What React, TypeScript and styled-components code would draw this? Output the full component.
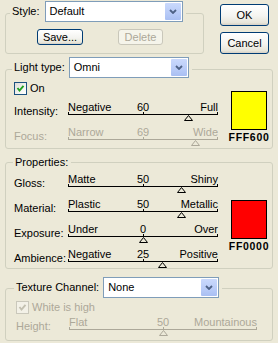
import React from 'react';
import styled, { createGlobalStyle } from 'styled-components';

const SOFT = '#aca899';

const GlobalStyle = createGlobalStyle`
  html, body {
    margin: 0;
    padding: 0;
    background: #ece9d8;
  }
  body {
    font-family: "Liberation Sans", Arial, sans-serif;
    font-size: 11px;
    color: #000;
  }
`;

const Dialog = styled.div`
  width: 278px;
  height: 343px;
  box-sizing: border-box;
  padding: 1px 5px 0;
  display: flex;
  flex-direction: column;
  overflow: hidden;
`;

const TopRow = styled.div`
  display: flex;
  align-items: flex-start;
`;

const Group = styled.fieldset<{ $w?: number; $mt?: number }>`
  width: ${(p) => (p.$w ? `${p.$w}px` : 'auto')};
  box-sizing: border-box;
  min-width: 0;
  margin: ${(p) => p.$mt ?? 0}px 0 0;
  padding: 0;
  border: 1px solid #d0d0bf;
  border-radius: 3px;
`;

const Legend = styled.legend<{ $ml: number; $pb?: number }>`
  margin-left: ${(p) => p.$ml}px;
  padding: 0 3px ${(p) => p.$pb ?? 0}px 2px;
  line-height: 13px;
`;

const LegendRow = styled.div<{ $gap: number }>`
  display: flex;
  align-items: center;
  gap: ${(p) => p.$gap}px;
`;

const SelectBox = styled.div<{ $w: number }>`
  width: ${(p) => p.$w}px;
  height: 21px;
  box-sizing: border-box;
  border: 1px solid #7f9db9;
  background: #fff;
  display: flex;
  align-items: center;
  justify-content: space-between;
  padding-left: 4px;
  line-height: 13px;
`;

const DropButton = styled.span`
  width: 16px;
  height: 17px;
  margin-right: 1px;
  border-radius: 1px;
  background: linear-gradient(180deg, #cad9fc 0%, #b8cbf7 60%, #a9bff3 100%);
  display: flex;
  align-items: center;
  justify-content: center;
`;

const PushButton = styled.button<{ $w: number; $h: number }>`
  width: ${(p) => p.$w}px;
  height: ${(p) => p.$h}px;
  box-sizing: border-box;
  padding: 0;
  border: 1px solid #003c74;
  border-radius: 3px;
  background: linear-gradient(180deg, #ffffff 0%, #f4f4f0 55%, #e8e6da 88%, #d6d0c5 100%);
  font-family: "Liberation Sans", Arial, sans-serif;
  font-size: 11px;
  color: #000;
  &:disabled {
    border-color: #c9c7ba;
    background: #f5f4ea;
    color: ${SOFT};
  }
`;

const SideButtons = styled.div`
  display: flex;
  flex-direction: column;
  gap: 6px;
  margin: 3px 0 0 16px;
`;

const StyleBody = styled.div`
  display: flex;
  gap: 35px;
  padding: 4px 0 8px 31px;
`;

const GroupBody = styled.div<{ $pad: string }>`
  display: flex;
  align-items: flex-start;
  padding: ${(p) => p.$pad};
`;

const Controls = styled.div<{ $gap: number }>`
  display: flex;
  flex-direction: column;
  gap: ${(p) => p.$gap}px;
`;

const CheckRow = styled.div<{ $off?: boolean; $mb?: number }>`
  display: flex;
  align-items: center;
  gap: 3px;
  height: 13px;
  line-height: 13px;
  margin-bottom: ${(p) => p.$mb ?? 0}px;
  color: ${(p) => (p.$off ? SOFT : '#000')};
`;

const CheckBox = styled.span<{ $off?: boolean }>`
  width: 13px;
  height: 13px;
  box-sizing: border-box;
  border: 1px solid ${(p) => (p.$off ? '#cac8bb' : '#1c5180')};
  background: ${(p) =>
    p.$off ? '#f3f1e7' : 'linear-gradient(135deg, #dcdcd7 0%, #f4f4f2 60%, #ffffff 100%)'};
  display: flex;
  align-items: center;
  justify-content: center;
`;

const Row = styled.div<{ $labelW: number }>`
  display: grid;
  grid-template-columns: ${(p) => p.$labelW}px auto;
  align-items: center;
`;

const RowLabel = styled.span<{ $off?: boolean }>`
  line-height: 12px;
  color: ${(p) => (p.$off ? SOFT : '#000')};
`;

const SliderWrap = styled.div<{ $w: number; $off?: boolean }>`
  width: ${(p) => p.$w}px;
  color: ${(p) => (p.$off ? SOFT : '#000')};
`;

const Ends = styled.div`
  display: grid;
  grid-template-columns: 1fr auto 1fr;
  height: 13px;
  line-height: 12px;
  white-space: nowrap;
`;

const MaxText = styled.span`
  justify-self: end;
`;

const Track = styled.div`
  position: relative;
  height: 1px;
  background: currentColor;
  margin-bottom: 6px;
`;

const Tick = styled.span<{ $at: 'start' | 'mid' | 'end' }>`
  position: absolute;
  bottom: 1px;
  width: 1px;
  height: 2px;
  background: currentColor;
  left: ${(p) => (p.$at === 'start' ? '0' : p.$at === 'mid' ? 'calc(50% - 0.5px)' : 'calc(100% - 1px)')};
`;

const Thumb = styled.svg`
  position: absolute;
  top: 1px;
  width: 9px;
  height: 6px;
  overflow: visible;
`;

const SwatchCol = styled.div<{ $mt: number }>`
  width: 36px;
  margin: ${(p) => p.$mt}px 0 0 13px;
  display: flex;
  flex-direction: column;
  align-items: center;
`;

const Swatch = styled.div<{ $c: string }>`
  width: 36px;
  height: 39px;
  box-sizing: border-box;
  border: 1px solid #000;
  background: ${(p) => p.$c};
`;

const HexText = styled.div`
  margin-top: 2px;
  font-family: "Liberation Sans", Arial, sans-serif;
  font-weight: bold;
  font-size: 10.5px;
  line-height: 11px;
  letter-spacing: 0.7px;
  white-space: nowrap;
`;

function Select({ width, value }: { width: number; value: string }) {
  return (
    <SelectBox $w={width}>
      <span>{value}</span>
      <DropButton>
        <svg width="8" height="5" viewBox="0 0 8 5">
          <path d="M1 1 L4 4 L7 1" fill="none" stroke="#4d6185" strokeWidth="1.8" />
        </svg>
      </DropButton>
    </SelectBox>
  );
}

function Check({ label, off, mb }: { label: string; off?: boolean; mb?: number }) {
  return (
    <CheckRow $off={off} $mb={mb}>
      <CheckBox $off={off}>
        <svg width="9" height="9" viewBox="0 0 9 9">
          <path d="M1.5 4 L3.5 6.5 L7.5 1.8" fill="none" stroke={off ? '#c3c0b0' : '#21a121'} strokeWidth="1.9" />
        </svg>
      </CheckBox>
      <span>{label}</span>
    </CheckRow>
  );
}

interface SliderProps {
  label: string;
  min: string;
  value: string;
  max: string;
  pos: number;
  width: number;
  labelW: number;
  off?: boolean;
}

function SliderRow({ label, min, value, max, pos, width, labelW, off }: SliderProps) {
  return (
    <Row $labelW={labelW}>
      <RowLabel $off={off}>{label}</RowLabel>
      <SliderWrap $w={width} $off={off}>
        <Ends>
          <span>{min}</span>
          <span>{value}</span>
          <MaxText>{max}</MaxText>
        </Ends>
        <Track>
          <Tick $at="start" />
          <Tick $at="mid" />
          <Tick $at="end" />
          <Thumb viewBox="0 0 9 6" style={{ left: `calc(${pos * 100}% - 4px)` }}>
            <polygon points="4.5,0.5 8.5,5.5 0.5,5.5" fill="#ece9d8" stroke="currentColor" strokeWidth="1" />
          </Thumb>
        </Track>
      </SliderWrap>
    </Row>
  );
}

function ColorSwatch({ color, hex, top }: { color: string; hex: string; top: number }) {
  return (
    <SwatchCol $mt={top}>
      <Swatch $c={color} />
      <HexText>{hex}</HexText>
    </SwatchCol>
  );
}

export default function App() {
  return (
    <>
      <GlobalStyle />
      <Dialog>
        <TopRow>
          <Group $w={199}>
            <Legend $ml={4} $pb={3}>
              <LegendRow $gap={5}>
                <span>Style:</span>
                <Select width={138} value="Default" />
              </LegendRow>
            </Legend>
            <StyleBody>
              <PushButton $w={46} $h={16}>Save...</PushButton>
              <PushButton $w={45} $h={16} disabled>
                Delete
              </PushButton>
            </StyleBody>
          </Group>
          <SideButtons>
            <PushButton $w={49} $h={22}>OK</PushButton>
            <PushButton $w={49} $h={22}>Cancel</PushButton>
          </SideButtons>
        </TopRow>

        <Group $mt={3}>
          <Legend $ml={6} $pb={4}>
            <LegendRow $gap={4}>
              <span>Light type:</span>
              <Select width={120} value="Omni" />
            </LegendRow>
          </Legend>
          <GroupBody $pad="0 5px 2px 8px">
            <Controls $gap={5}>
              <Check label="On" mb={1} />
              <SliderRow label="Intensity:" min="Negative" value="60" max="Full" pos={0.8} width={150} labelW={54} />
              <SliderRow label="Focus:" min="Narrow" value="69" max="Wide" pos={0.845} width={150} labelW={54} off />
            </Controls>
            <ColorSwatch color="#ffff00" hex="FFF600" top={9} />
          </GroupBody>
        </Group>

        <Group $mt={7}>
          <Legend $ml={7}>Properties:</Legend>
          <GroupBody $pad="4px 5px 0 8px">
            <Controls $gap={5}>
              <SliderRow label="Gloss:" min="Matte" value="50" max="Shiny" pos={0.75} width={150} labelW={54} />
              <SliderRow label="Material:" min="Plastic" value="50" max="Metallic" pos={0.75} width={150} labelW={54} />
              <SliderRow label="Exposure:" min="Under" value="0" max="Over" pos={0.5} width={150} labelW={54} />
              <SliderRow label="Ambience:" min="Negative" value="25" max="Positive" pos={0.625} width={150} labelW={54} />
            </Controls>
            <ColorSwatch color="#ff0000" hex="FF0000" top={27} />
          </GroupBody>
        </Group>

        <Group $mt={8}>
          <Legend $ml={8} $pb={2}>
            <LegendRow $gap={4}>
              <span>Texture Channel:</span>
              <Select width={116} value="None" />
            </LegendRow>
          </Legend>
          <GroupBody $pad="1px 16px 4px 10px">
            <Controls $gap={2}>
              <Check label="White is high" off />
              <SliderRow label="Height:" min="Flat" value="50" max="Mountainous" pos={0.5} width={188} labelW={53} off />
            </Controls>
          </GroupBody>
        </Group>
      </Dialog>
    </>
  );
}
